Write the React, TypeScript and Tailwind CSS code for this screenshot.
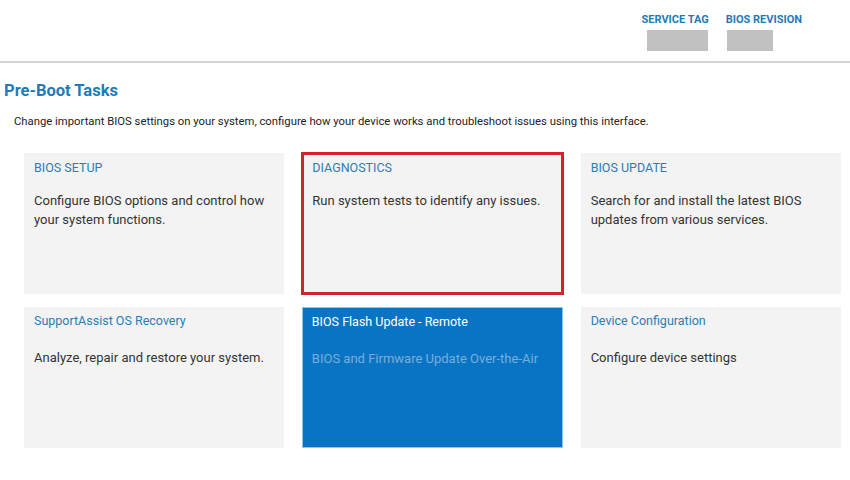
import React from 'react'

interface Task {
  title: string
  text: string
  variant?: 'default' | 'selected' | 'active'
}

const tasks: Task[] = [
  { title: 'BIOS SETUP', text: 'Configure BIOS options and control how your system functions.' },
  { title: 'DIAGNOSTICS', text: 'Run system tests to identify any issues.', variant: 'selected' },
  { title: 'BIOS UPDATE', text: 'Search for and install the latest BIOS updates from various services.' },
  { title: 'SupportAssist OS Recovery', text: 'Analyze, repair and restore your system.' },
  { title: 'BIOS Flash Update - Remote', text: 'BIOS and Firmware Update Over-the-Air', variant: 'active' },
  { title: 'Device Configuration', text: 'Configure device settings' },
]

function TaskCard({ task, lower }: { task: Task; lower: boolean }) {
  const active = task.variant === 'active'
  const selected = task.variant === 'selected'
  return (
    <div
      className={`px-[10px] ${lower ? 'pt-[6px]' : 'pt-[7px]'} ${
        active
          ? 'bg-[#0a74c4] border-[1.5px] border-[#8cc4e8] pl-[8.5px] pt-[4.5px]'
          : 'bg-[#f3f3f3]'
      } ${selected ? 'outline-[3px] outline-solid outline-[#d3222b] -outline-offset-2' : ''}`}
    >
      <div className={`text-[12.5px] leading-[16px] ${active ? 'text-white' : 'text-[#2a7dba]'}`}>
        {task.title}
      </div>
      <p
        className={`${lower ? 'mt-[19px]' : 'mt-[15px]'} text-[13px] leading-[19px] ${
          active ? 'text-[#78aedb]' : 'text-[#333333]'
        }`}
      >
        {task.text}
      </p>
    </div>
  )
}

export default function App() {
  return (
    <div className="w-[850px] h-[480px] bg-white overflow-hidden font-['Roboto','Liberation_Sans',sans-serif]">
      {/* Header */}
      <div className="h-[63px] border-b-2 border-[#d2d2d2] flex justify-end pr-[48px] pt-[13px] gap-[17px]">
        <div className="flex flex-col items-start">
          <span className="text-[11px] leading-[14px] font-bold text-[#1f7ab8]">SERVICE TAG</span>
          <div className="mt-[3px] ml-[5px] w-[61px] h-[21px] bg-[#c1c1c1]" />
        </div>
        <div className="flex flex-col items-start">
          <span className="text-[11px] leading-[14px] font-bold text-[#1f7ab8]">BIOS REVISION</span>
          <div className="mt-[3px] ml-[1px] w-[46px] h-[21px] bg-[#c1c1c1]" />
        </div>
      </div>

      {/* Title */}
      <h1 className="mt-[18px] ml-[4px] text-[16.5px] leading-[20px] font-bold text-[#1f7ab8]">Pre-Boot Tasks</h1>
      <p className="mt-[13px] ml-[14px] text-[11.3px] leading-[16px] text-[#222222]">
        Change important BIOS settings on your system, configure how your device works and troubleshoot issues using this interface.
      </p>

      {/* Task grid */}
      <div className="mt-[23px] ml-[24px] w-[817px] grid grid-cols-3 gap-x-[18px] gap-y-[13px] auto-rows-[141px]">
        {tasks.map((t, i) => (
          <TaskCard key={t.title} task={t} lower={i >= 3} />
        ))}
      </div>
    </div>
  )
}
